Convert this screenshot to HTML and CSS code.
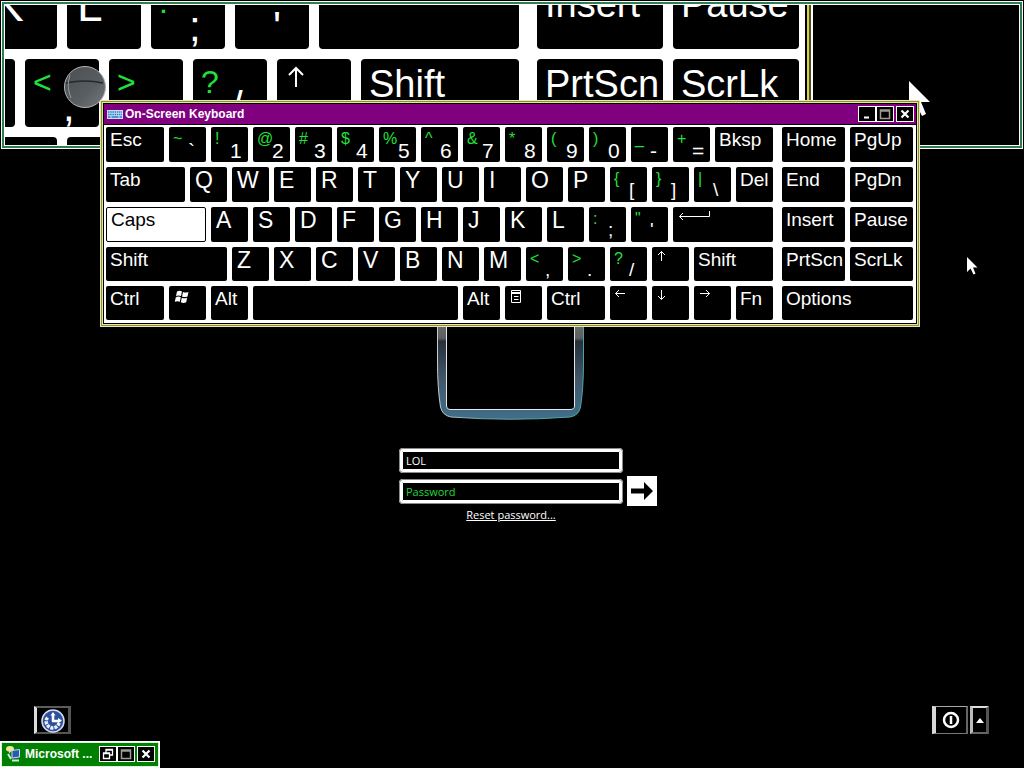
FILE: index.html
```html
<!DOCTYPE html>
<html lang="en">
<head>
<meta charset="utf-8">
<title>Log on</title>
<link rel="stylesheet" href="styles.css">
</head>
<body>
<main class="desktop">
  <form class="login">
    <svg class="avatar" width="150" height="104" viewBox="0 0 150 104" aria-hidden="true">
      <defs>
        <linearGradient id="frame" x1="0" y1="0" x2="0" y2="1">
          <stop offset="0" stop-color="#707072"/>
          <stop offset=".2" stop-color="#5c5e60"/>
          <stop offset=".23" stop-color="#25303a"/>
          <stop offset=".6" stop-color="#42566a"/>
          <stop offset="1" stop-color="#3f6f88"/>
        </linearGradient>
        <linearGradient id="edge" x1="0" y1="0" x2="1" y2="0">
          <stop offset="0" stop-color="#c8ccd0"/>
          <stop offset=".3" stop-color="#6aa0a8"/>
          <stop offset="1" stop-color="#4aa5a8"/>
        </linearGradient>
      </defs>
      <path d="M1.500-2V42Q1.500 68 4.500 87Q6.500 95.500 15 97Q75 101.500 134 97Q143 95.500 144.500 87Q147.500 68 147.500 42V-2Z" fill="url(#frame)" stroke="url(#edge)"/>
      <path d="M10.500-2V86Q10.500 89.500 14 89.500H134Q138.500 89.500 138.500 86V-2Z" fill="#000" stroke="#e4e8ea"/>
    </svg>
    <input class="field user" type="text" value="LOL" aria-label="User name">
    <input class="field pass" type="password" placeholder="Password" aria-label="Password">
    <button class="go" type="button" aria-label="Log on">
      <svg width="24" height="20" viewBox="0 0 24 20"><path d="M1 7.500H14V1L23 10L14 19V12.500H1Z" fill="#000"/></svg>
    </button>
    <a class="reset" href="#">Reset password...</a>
  </form>

  <footer class="tray">
    <button class="ease" type="button" aria-label="Ease of access">
      <svg width="26" height="26" viewBox="0 0 26 26">
        <circle cx="13" cy="13" r="11" fill="#2d4f9c" stroke="#d5def0" stroke-width="1.500"/>
        <path d="M7.500 9.500A6.500 6.500 0 1 0 19 15" fill="none" stroke="#e8eefa" stroke-width="3.500" stroke-dasharray="3 1"/>
        <path d="M13 13.500V6M12 13H19" stroke="#fff" stroke-width="2.500"/>
        <path d="M10.500 7.500L13 4L15.500 7.500ZM18 10L22 12.500L18 15.500Z" fill="#fff"/>
      </svg>
    </button>
    <div class="power">
      <button class="power-btn" type="button" aria-label="Shut down">
        <svg width="18" height="18" viewBox="0 0 18 18" fill="none" stroke="#fff" stroke-width="2.500"><circle cx="9" cy="9" r="7"/><path d="M9 5V13"/></svg>
      </button>
      <button class="power-menu" type="button" aria-label="Power options">
        <svg width="8" height="5" viewBox="0 0 8 5"><path d="M0 5L4 0L8 5Z" fill="#fff"/></svg>
      </button>
    </div>
  </footer>

  <section class="magnifier" aria-label="Magnifier">
    <div class="lens">
      <div class="lens-keys">
        <div class="lens-row lens-a">
          <button class="key w2"><span class="letter">K</span></button>
          <button class="key w2"><span class="letter">L</span></button>
          <button class="key w2"><span class="alt">:</span><span class="base">;</span></button>
          <button class="key w2"><span class="alt">"</span><span class="base">'</span></button>
          <button class="key w5" aria-label="Enter"></button>
          <button class="key nav first"><span class="word">Insert</span></button>
          <button class="key nav"><span class="word">Pause</span></button>
        </div>
        <div class="lens-row lens-b">
          <button class="key w2" aria-label="M"></button>
          <button class="key w2"><span class="alt">&lt;</span><span class="base">,</span></button>
          <button class="key w2"><span class="alt">&gt;</span><span class="base">.</span></button>
          <button class="key w2"><span class="alt">?</span><span class="base">/</span></button>
          <button class="key w2" aria-label="Up"><svg class="arrow" viewBox="0 0 12 12"><path d="M5.500 11V1.500M2 5L5.500 1.500L9 5"/></svg></button>
          <button class="key w4"><span class="word">Shift</span></button>
          <button class="key nav first"><span class="word">PrtScn</span></button>
          <button class="key nav"><span class="word">ScrLk</span></button>
        </div>
        <div class="lens-row lens-c">
          <button class="key w2" aria-label="Menu"></button>
          <button class="key w3" aria-label="Ctrl"></button>
        </div>
      </div>
      <div class="lens-edge"></div>
    </div>
    <svg class="ball" width="46" height="46" viewBox="0 0 46 46" aria-hidden="true">
      <defs><linearGradient id="glass" x1="0" y1="0" x2="1" y2="1"><stop offset="0" stop-color="#4a4e50"/><stop offset=".6" stop-color="#595e62"/><stop offset="1" stop-color="#777c80"/></linearGradient></defs>
      <circle cx="23" cy="23" r="20.500" fill="url(#glass)" stroke="#b4b4b4"/>
      <path d="M4 19Q23 15 41 19" fill="none" stroke="#26282a" stroke-width="1.500"/>
      <path d="M8 11Q4 22 9 34" fill="none" stroke="#92979a"/>
    </svg>
    <svg class="cursor-big" width="22" height="36" viewBox="0 0 11 18" aria-hidden="true"><path d="M0 0V15L3.500 11.500L6.500 17.500L8.500 16.500L6 10.500H10.500Z" fill="#fff"/></svg>
  </section>

  <section class="osk" aria-label="On-Screen Keyboard">
    <div class="osk-frame">
      <header class="osk-title">
        <svg width="16" height="9" viewBox="0 0 16 9" aria-hidden="true"><rect width="16" height="9" fill="#c4e2fa"/><path d="M1 2H15M1 4.500H15" stroke="#2878c0" stroke-width="1.500" stroke-dasharray="1.500 .7"/><path d="M1 7H3.500M4.500 7H11.500M12.500 7H15" stroke="#2878c0" stroke-width="1.500"/></svg>
        <h1>On-Screen Keyboard</h1>
        <button class="cap" aria-label="Minimize"><svg viewBox="0 0 16 14"><path d="M5 10.500H10" stroke="#fff" stroke-width="2"/></svg></button>
        <button class="cap" aria-label="Maximize"><svg viewBox="0 0 16 14"><path d="M3.500 3H12.500V11.500H3.500ZM3 4H13" fill="none" stroke="#9c9c90" stroke-width="1.500"/></svg></button>
        <button class="cap close" aria-label="Close"><svg viewBox="0 0 16 14"><path d="M4.500 3.500L11.500 10.500M11.500 3.500L4.500 10.500" stroke="#fff" stroke-width="2.200"/></svg></button>
      </header>
      <div class="pads">
        <div class="pad">
          <button class="key w3"><span class="word">Esc</span></button>
          <button class="key w2"><span class="alt">~</span><span class="base">`</span></button>
          <button class="key w2"><span class="alt">!</span><span class="base">1</span></button>
          <button class="key w2"><span class="alt">@</span><span class="base">2</span></button>
          <button class="key w2"><span class="alt">#</span><span class="base">3</span></button>
          <button class="key w2"><span class="alt">$</span><span class="base">4</span></button>
          <button class="key w2"><span class="alt">%</span><span class="base">5</span></button>
          <button class="key w2"><span class="alt">^</span><span class="base">6</span></button>
          <button class="key w2"><span class="alt">&amp;</span><span class="base">7</span></button>
          <button class="key w2"><span class="alt">*</span><span class="base">8</span></button>
          <button class="key w2"><span class="alt">(</span><span class="base">9</span></button>
          <button class="key w2"><span class="alt">)</span><span class="base">0</span></button>
          <button class="key w2"><span class="alt">_</span><span class="base">-</span></button>
          <button class="key w2"><span class="alt">+</span><span class="base">=</span></button>
          <button class="key w3"><span class="word">Bksp</span></button>

          <button class="key w4"><span class="word">Tab</span></button>
          <button class="key w2"><span class="letter">Q</span></button>
          <button class="key w2"><span class="letter">W</span></button>
          <button class="key w2"><span class="letter">E</span></button>
          <button class="key w2"><span class="letter">R</span></button>
          <button class="key w2"><span class="letter">T</span></button>
          <button class="key w2"><span class="letter">Y</span></button>
          <button class="key w2"><span class="letter">U</span></button>
          <button class="key w2"><span class="letter">I</span></button>
          <button class="key w2"><span class="letter">O</span></button>
          <button class="key w2"><span class="letter">P</span></button>
          <button class="key w2"><span class="alt">{</span><span class="base mark">[</span></button>
          <button class="key w2"><span class="alt">}</span><span class="base mark">]</span></button>
          <button class="key w2"><span class="alt">|</span><span class="base mark">\</span></button>
          <button class="key w2"><span class="word">Del</span></button>

          <button class="key w5 on" aria-pressed="true"><span class="word">Caps</span></button>
          <button class="key w2"><span class="letter">A</span></button>
          <button class="key w2"><span class="letter">S</span></button>
          <button class="key w2"><span class="letter">D</span></button>
          <button class="key w2"><span class="letter">F</span></button>
          <button class="key w2"><span class="letter">G</span></button>
          <button class="key w2"><span class="letter">H</span></button>
          <button class="key w2"><span class="letter">J</span></button>
          <button class="key w2"><span class="letter">K</span></button>
          <button class="key w2"><span class="letter">L</span></button>
          <button class="key w2"><span class="alt">:</span><span class="base mark">;</span></button>
          <button class="key w2"><span class="alt">"</span><span class="base mark">'</span></button>
          <button class="key w5" aria-label="Enter"><svg class="enter" viewBox="0 0 33 12"><path d="M31.500 1V6.500H1.500M5 3L1.500 6.500L5 10"/></svg></button>

          <button class="key w6"><span class="word">Shift</span></button>
          <button class="key w2"><span class="letter">Z</span></button>
          <button class="key w2"><span class="letter">X</span></button>
          <button class="key w2"><span class="letter">C</span></button>
          <button class="key w2"><span class="letter">V</span></button>
          <button class="key w2"><span class="letter">B</span></button>
          <button class="key w2"><span class="letter">N</span></button>
          <button class="key w2"><span class="letter">M</span></button>
          <button class="key w2"><span class="alt">&lt;</span><span class="base mark">,</span></button>
          <button class="key w2"><span class="alt">&gt;</span><span class="base mark">.</span></button>
          <button class="key w2"><span class="alt">?</span><span class="base mark">/</span></button>
          <button class="key w2" aria-label="Up"><svg class="arrow" viewBox="0 0 12 12"><path d="M5.500 11V1.500M2 5L5.500 1.500L9 5"/></svg></button>
          <button class="key w4"><span class="word">Shift</span></button>

          <button class="key w3"><span class="word">Ctrl</span></button>
          <button class="key w2" aria-label="Windows"><svg class="win" viewBox="0 0 16 14"><path d="M3 1.500Q5.500 .2 8 1.500L7 6Q4.500 4.800 2 6ZM9 2Q11.500 3.200 14.500 2L13.500 6.500Q10.500 7.700 8 6.500ZM1.800 7.200Q4.500 6 6.800 7.200L5.800 11.800Q3.500 10.500 .8 11.800ZM7.800 7.700Q10.500 9 13.200 7.700L12.200 12.300Q9.500 13.500 6.800 12.300Z"/></svg></button>
          <button class="key w2"><span class="word">Alt</span></button>
          <button class="key w10" aria-label="Space"></button>
          <button class="key w2"><span class="word">Alt</span></button>
          <button class="key w2" aria-label="Menu"><svg class="menu" viewBox="0 0 12 14"><path d="M1.500 .5H10.500V12.500H1.500ZM1 2.500H11M1 3.500H11M4 6.500H8.500M4 9.500H8.500"/></svg></button>
          <button class="key w3"><span class="word">Ctrl</span></button>
          <button class="key w2" aria-label="Left"><svg class="arrow" viewBox="0 0 12 12"><path d="M11 4.500H1.500M5 1L1.500 4.500L5 8"/></svg></button>
          <button class="key w2" aria-label="Down"><svg class="arrow" viewBox="0 0 12 12"><path d="M5.500 1V10.500M2 7L5.500 10.500L9 7"/></svg></button>
          <button class="key w2" aria-label="Right"><svg class="arrow" viewBox="0 0 12 12"><path d="M2 4.500H11.500M8 1L11.500 4.500L8 8"/></svg></button>
          <button class="key w2"><span class="word">Fn</span></button>
        </div>
        <div class="navpad">
          <button class="key"><span class="word">Home</span></button>
          <button class="key"><span class="word">PgUp</span></button>
          <button class="key"><span class="word">End</span></button>
          <button class="key"><span class="word">PgDn</span></button>
          <button class="key"><span class="word">Insert</span></button>
          <button class="key"><span class="word">Pause</span></button>
          <button class="key"><span class="word">PrtScn</span></button>
          <button class="key"><span class="word">ScrLk</span></button>
          <button class="key wide"><span class="word">Options</span></button>
        </div>
      </div>
    </div>
  </section>

  <section class="mini" aria-label="Minimized window">
    <svg width="17" height="17" viewBox="0 0 17 17" aria-hidden="true">
      <path d="M1 4Q1 1 5 1Q9 1 9 4Q9 6 6 6.500L4 8.500V6.500Q1 6 1 4Z" fill="#f0e6a0"/>
      <path d="M7 5.500L14.500 4.500V12L7 13Z" fill="#2858b8" stroke="#c8daf0"/>
      <path d="M7 15.500H14M3 9L6 14" stroke="#d8e0e8" stroke-width="2"/>
    </svg>
    <h2>Microsoft ...</h2>
    <button class="cap" aria-label="Restore"><svg viewBox="0 0 16 14"><path d="M6 5.500V2.500H12.500V8H10M6 3H12.500M3.500 6H9.500V11.500H3.500ZM3.500 6.500H9.500" fill="none" stroke="#fff" stroke-width="1.300"/></svg></button>
    <button class="cap" aria-label="Maximize"><svg viewBox="0 0 16 14"><path d="M3.500 3H12.500V11.500H3.500ZM3 4H13" fill="none" stroke="#9c9c90" stroke-width="1.500"/></svg></button>
    <button class="cap close" aria-label="Close"><svg viewBox="0 0 16 14"><path d="M4.500 3.500L11.500 10.500M11.500 3.500L4.500 10.500" stroke="#fff" stroke-width="2.200"/></svg></button>
  </section>

  <svg class="cursor" width="11" height="18" viewBox="0 0 11 18" aria-hidden="true"><path d="M0 0V15L3.500 11.500L6.500 17.500L8.500 16.500L6 10.500H10.500Z" fill="#fff"/></svg>
</main>
</body>
</html>
```
FILE: styles.css
```css
* { box-sizing: border-box; }
body {
  margin: 0;
  background: #000;
  color: #fff;
  font-family: "Liberation Sans", Arial, sans-serif;
}
button {
  margin: 0;
  padding: 0;
  border: 0;
  background: #000;
  color: #fff;
  font: inherit;
}
svg { display: block; flex: none; }

.desktop {
  position: relative;
  display: flex;
  flex-direction: column;
  min-height: 100vh;
  overflow: hidden;
}

/* Log-on form */
.login {
  flex: 1;
  display: grid;
  grid-template-columns: 1fr 224px 1fr;
  grid-auto-rows: max-content;
  column-gap: 4px;
  padding-top: 320px;
  padding-right: 2px;
}
.avatar { grid-column: 2; justify-self: center; margin-bottom: 24px; }
.field {
  grid-column: 2;
  width: 100%;
  height: 25px;
  padding: 0 4px;
  border: 3px solid #fff;
  outline: 1px solid #8a8a8a;
  outline-offset: -1px;
  box-shadow: inset 0 0 0 1px #fff;
  border-radius: 4px;
  background: #000;
  color: #fff;
  font: 11px "Open Sans", "Noto Sans", sans-serif;
}
.field::placeholder { color: #22d83a; opacity: 1; }
.pass { margin-top: 6px; }
.go {
  grid-column: 3;
  display: grid;
  place-items: center;
  width: 30px;
  height: 30px;
  margin-top: 3px;
  margin-bottom: -3px;
  background: #fff;
}
.reset {
  grid-column: 2;
  justify-self: center;
  margin-top: 3px;
  color: #fff;
  font: 11px/16px "Open Sans", "Noto Sans", sans-serif;
}

/* Bottom controls */
.tray {
  display: flex;
  justify-content: space-between;
  padding: 0 35px 34px 34px;
}
.tray button {
  display: grid;
  place-items: center;
  height: 28px;
  border: 2px solid #5c5c5c;
}
.tray .ease { width: 37px; border-width: 2px 3px; border-color: #5c5c5c #555 #555 #ddd; }
.power { display: flex; gap: 2px; }
.tray .power-btn { width: 36px; border-width: 1px 2px 1px 4px; border-color: #aaa #666 #777 #d8d8d8; }
.tray .power-menu { width: 19px; border-width: 2px 3px; border-color: #ddd #555 #666 #bbb; }

/* Keys: --s is the magnification */
.key {
  --s: 1;
  display: flex;
  align-items: flex-start;
  min-width: 0;
  padding-left: calc(var(--s) * 4px);
  border-radius: calc(var(--s) * 2px);
  text-align: left;
  white-space: nowrap;
  cursor: default;
}
.word { font-size: calc(var(--s) * 19px); line-height: calc(var(--s) * 25px); }
.letter { font-size: calc(var(--s) * 23px); line-height: calc(var(--s) * 26px); }
.key:has(.letter) { padding-left: calc(var(--s) * 5px); }
.alt {
  flex: none;
  width: calc(var(--s) * 15px);
  color: #22e03a;
  font-size: calc(var(--s) * 16px);
  line-height: calc(var(--s) * 23px);
}
.base {
  margin-top: calc(var(--s) * 11px);
  font-size: calc(var(--s) * 21px);
  line-height: calc(var(--s) * 26px);
}
.mark { font-size: calc(var(--s) * 19px); line-height: calc(var(--s) * 24px); }
.key path { fill: none; stroke: #fff; stroke-width: 1; }
.key .win path { fill: #fff; stroke: none; }
.arrow { width: calc(var(--s) * 12px); height: calc(var(--s) * 12px); margin-top: calc(var(--s) * 3px); }
.enter { width: 33px; height: 12px; margin: 3px 0 0 1px; }
.win { width: 16px; height: 14px; margin: 4px 0 0 1px; }
.menu { width: 12px; height: 14px; margin: 4px 0 0 1px; }
.on { background: #fff; color: #000; border: 1px solid #000; }
.on .word { line-height: 23px; }

/* Magnifier window */
.magnifier {
  position: absolute;
  top: 1px;
  left: 1px;
  right: 1px;
  border: 1px solid #fff;
  padding: 2px;
  background: #2f7d4c;
}
.lens {
  display: flex;
  height: 142px;
  border: 1px solid #fff;
  background: #000;
  overflow: hidden;
}
.lens-keys {
  flex: none;
  display: flex;
  flex-direction: column;
  gap: 10px;
  width: 800px;
  background: #fff;
  overflow: hidden;
}
.lens-edge {
  flex: none;
  width: 8px;
  background: linear-gradient(90deg, #000 0 2px, #d8d04a 2px 4px, #50501c 4px 6px, #fff 6px 8px);
}
.lens-row { display: flex; gap: 10px; overflow: hidden; }
.lens-row .key { --s: 2; flex: none; height: 70px; }
.lens-a { align-items: flex-end; height: 44px; margin-left: -22px; }
.lens-b { height: 68px; margin-left: -64px; }
.lens-b .key { height: 68px; }
.lens-c { height: 8px; margin-left: -22px; }
.lens-row .w2 { width: 74px; }
.lens-row .w3 { width: 116px; }
.lens-row .w4 { width: 158px; }
.lens-row .w5 { width: 200px; }
.lens-row .nav { width: 126px; }
.lens-row .first { margin-left: 8px; }
.ball { position: absolute; left: 60px; top: 62px; }
.cursor-big { position: absolute; left: 907px; top: 79px; }
.cursor { position: absolute; left: 967px; top: 257px; }

/* On-screen keyboard window */
.osk {
  position: absolute;
  top: 100px;
  left: 100px;
  width: 820px;
  border: 1px solid #e6e6b8;
  padding: 1px;
  background: #8f9030;
}
.osk-frame {
  border: 1px solid #e6e6a0;
  background: #000;
  padding: 1px;
}
.osk-title {
  display: flex;
  align-items: center;
  height: 20px;
  padding: 0 2px 0 3px;
  background: #800080;
}
.osk-title h1, .mini h2 {
  flex: 1;
  margin: 0 0 0 2px;
  font-size: 12px;
  line-height: 16px;
  white-space: nowrap;
}
.cap {
  width: 18px;
  height: 16px;
  border: 1px solid #fff;
}
.cap svg { width: 16px; height: 14px; }
.close { margin-left: 2px; }
.pads {
  display: flex;
  gap: 9px;
  margin-top: 1px;
  padding: 2px 3px 3px 2px;
  background: #fff;
}
.pad, .navpad {
  display: grid;
  grid-template-rows: 35px 35px 35px 34px 34px;
  gap: 5px;
}
.pad { flex: 1; grid-template-columns: repeat(32, 1fr); }
.navpad { width: 131px; grid-template-columns: 1fr 1fr; }
.pad .w2 { grid-column: span 2; }
.pad .w3 { grid-column: span 3; }
.pad .w4 { grid-column: span 4; }
.pad .w5 { grid-column: span 5; }
.pad .w6 { grid-column: span 6; }
.pad .w10 { grid-column: span 10; }
.wide { grid-column: span 2; }

/* Minimized window */
.mini {
  position: absolute;
  left: 0;
  bottom: 0;
  display: flex;
  align-items: center;
  width: 160px;
  height: 27px;
  padding: 0 4px 2px 4px;
  border: 1px solid #fff;
  background: #008000;
  box-shadow: inset 0 0 0 1px #e0f0e0;
}
.mini h2 { margin-left: 3px; }
```
